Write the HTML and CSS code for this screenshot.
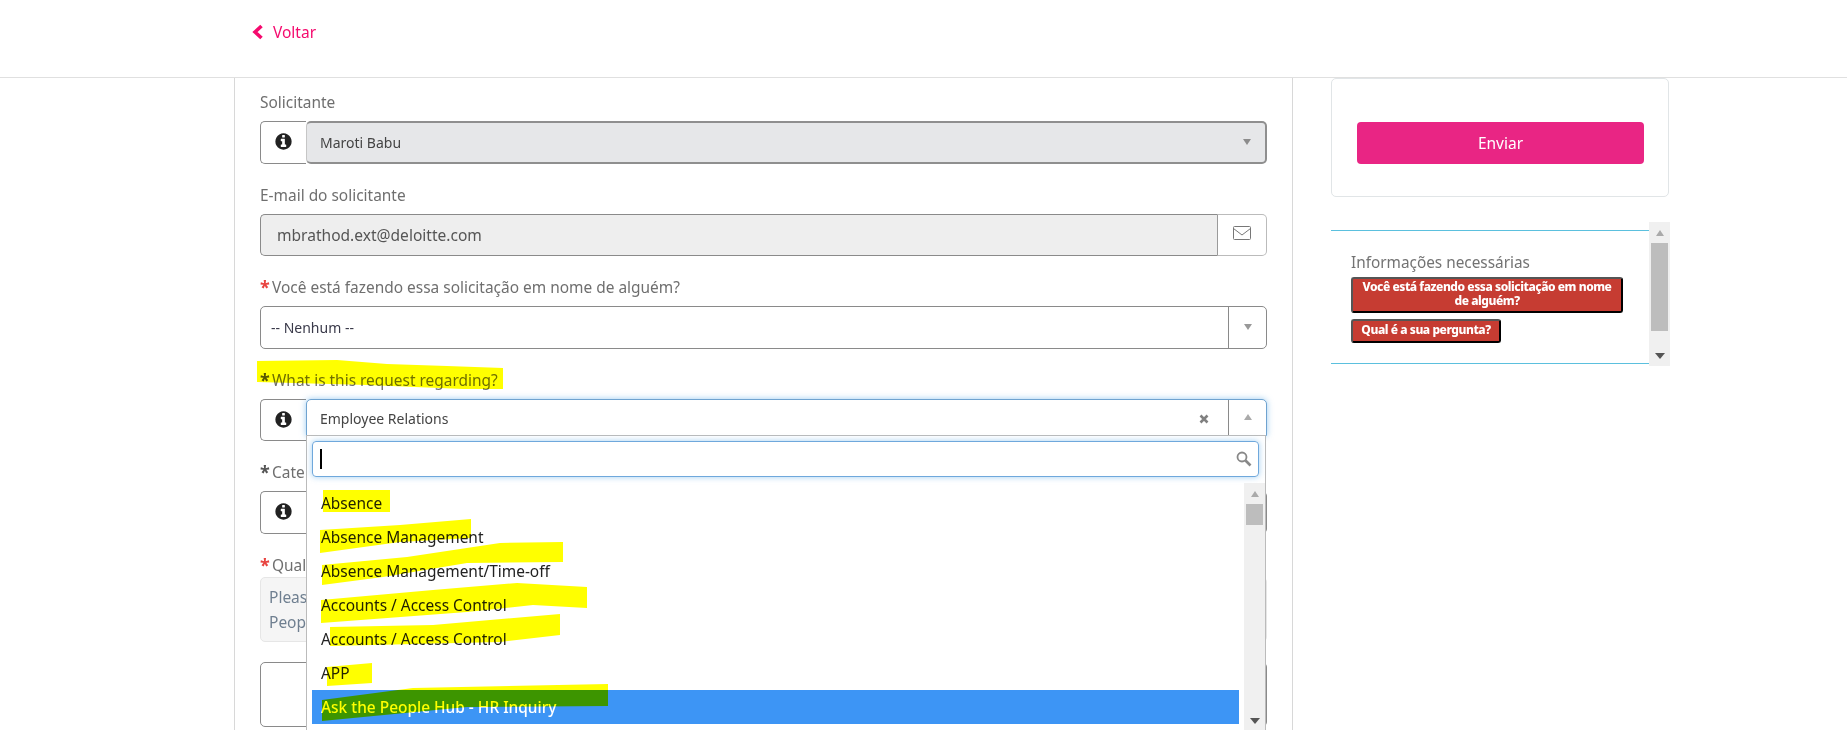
FILE: index.html
```html
<!DOCTYPE html>
<html lang="pt">
<head>
<meta charset="utf-8">
<title>Solicitação</title>
<link rel="stylesheet" href="styles.css">
</head>
<body>
<svg class="defs" width="0" height="0" aria-hidden="true">
  <symbol id="info" viewBox="0 0 1536 1792"><path d="M1024 1376v-160q0-14-9-23t-23-9h-96v-512q0-14-9-23t-23-9h-320q-14 0-23 9t-9 23v160q0 14 9 23t23 9h96v320h-96q-14 0-23 9t-9 23v160q0 14 9 23t23 9h448q14 0 23-9t9-23zm-128-896v-160q0-14-9-23t-23-9h-192q-14 0-23 9t-9 23v160q0 14 9 23t23 9h192q14 0 23-9t9-23zm640 416q0 209-103 385.5t-279.5 279.5-385.5 103-385.5-103-279.5-279.5-103-385.5 103-385.5 279.5-279.5 385.5-103 385.5 103 279.5 279.5 103 385.5z"/></symbol>
</svg>

<header class="topbar">
  <a class="back" href="#">
    <svg class="back-icon" viewBox="0 0 12 16"><polyline points="9.5,2 3,8 9.5,14"/></svg>
    <span>Voltar</span>
  </a>
</header>

<div class="page">
  <main class="form-col">
    <div class="group">
      <label class="label">Solicitante</label>
      <div class="input-group">
        <span class="addon"><svg class="info-icon"><use href="#info"/></svg></span>
        <div class="combo">
          <div class="select select-disabled">
            <span class="select-text">Maroti Babu</span>
            <i class="tri tri-down tri-disabled"></i>
          </div>
        </div>
      </div>
    </div>

    <div class="group">
      <label class="label">E-mail do solicitante</label>
      <div class="input-group">
        <div class="email-input">mbrathod.ext@deloitte.com</div>
        <span class="addon-right">
          <svg class="mail-icon" viewBox="0 0 18 14"><rect x="0.5" y="0.5" width="17" height="13" rx="1"/><polyline points="0.5,2.5 9,9 17.5,2.5"/></svg>
        </span>
      </div>
    </div>

    <div class="group">
      <label class="label"><span class="req req-red">*</span>Você está fazendo essa solicitação em nome de alguém?</label>
      <div class="select select-plain">
        <span class="select-text select-none">-- Nenhum --</span>
        <span class="select-btn"><i class="tri tri-down"></i></span>
      </div>
    </div>

    <div class="group">
      <label class="label"><span class="req">*</span>What is this request regarding?</label>
      <div class="input-group">
        <span class="addon"><svg class="info-icon"><use href="#info"/></svg></span>
        <div class="combo">
          <div class="select select-open">
            <span class="select-text">Employee Relations</span>
            <svg class="clear-icon" viewBox="0 0 10 10"><path d="M1.5 1.5l7 7M8.5 1.5l-7 7"/></svg>
            <span class="select-btn"><i class="tri tri-up"></i></span>
          </div>
          <div class="menu">
            <div class="menu-search">
              <span class="caret"></span>
              <svg class="search-icon" viewBox="0 0 16 16"><circle cx="6" cy="6" r="4.5"/><path d="M9.5 9.5l5 5"/></svg>
            </div>
            <div class="menu-body">
              <ul class="menu-list">
                <li>Absence</li>
                <li>Absence Management</li>
                <li>Absence Management/Time-off</li>
                <li>Accounts / Access Control</li>
                <li>Accounts / Access Control</li>
                <li>APP</li>
                <li class="is-active">Ask the People Hub - HR Inquiry</li>
              </ul>
              <div class="scrollbar scrollbar-menu">
                <span class="sb-btn"><i class="tri tri-up"></i></span>
                <span class="sb-thumb sb-thumb-menu"></span>
                <span class="sb-space"></span>
                <span class="sb-btn"><i class="tri tri-down tri-dark"></i></span>
              </div>
            </div>
          </div>
        </div>
      </div>
    </div>

    <div class="group">
      <label class="label"><span class="req">*</span>Cate</label>
      <div class="input-group">
        <span class="addon"><svg class="info-icon"><use href="#info"/></svg></span>
        <div class="combo"><div class="select"></div></div>
      </div>
    </div>

    <div class="group group-last">
      <label class="label"><span class="req req-red">*</span>Qual</label>
      <div class="help"><div>Pleas</div><div>Peopl</div></div>
      <div class="textarea"></div>
    </div>
  </main>

  <aside class="side-col">
    <div class="card"><button class="submit" type="button">Enviar</button></div>
    <div class="panel">
      <div class="panel-body">
        <div class="panel-title">Informações necessárias</div>
        <div class="badge">Você está fazendo essa solicitação em nome de alguém?</div>
        <div class="badge badge-short">Qual é a sua pergunta?</div>
      </div>
      <div class="scrollbar">
        <span class="sb-btn"><i class="tri tri-up"></i></span>
        <span class="sb-thumb"></span>
        <span class="sb-space"></span>
        <span class="sb-btn"><i class="tri tri-down tri-dark"></i></span>
      </div>
    </div>
  </aside>
</div>

<svg class="marker" viewBox="0 0 1847 730" aria-hidden="true">
  <polygon points="257,361 337,360 387,364 447,366 503,368 503,389 463,389 367,385 257,382"/>
  <polygon points="323,490 390,490 390,512 323,512"/>
  <polygon points="320,530 400,525 471,519 471,538 400,542 320,553"/>
  <polygon points="322,565 407,557 500,543 563,542 563,562 467,563 383,577 322,585"/>
  <polygon points="321,600 433,590 517,583 587,587 587,608 533,605 467,612 321,623"/>
  <polygon points="330,627 433,625 560,614 560,635 500,642 330,646"/>
  <polygon points="327,667 372,663 372,683 327,686"/>
  <polygon points="322,700 413,688 608,684 608,706 467,707 322,721"/>
</svg>
</body>
</html>
```
FILE: styles.css
```css
* { box-sizing: border-box; }
html, body { margin: 0; padding: 0; }
body {
  position: relative;
  width: 1847px;
  height: 730px;
  overflow: hidden;
  background: #fff;
  font-family: "Noto Sans", "Liberation Sans", sans-serif;
  color: #444;
}
.defs { position: absolute; }

/* Top bar */
.topbar {
  height: 78px;
  border-bottom: 1px solid #e0e0e0;
  padding: 21px 0 0 252px;
}
.back {
  display: flex;
  align-items: center;
  gap: 9px;
  height: 22px;
  color: #f50a6e;
  text-decoration: none;
  font-size: 15.5px;
}
.back-icon { width: 12px; height: 16px; }
.back-icon polyline { fill: none; stroke: #f50a6e; stroke-width: 3.6; }

/* Layout */
.page { display: flex; align-items: flex-start; margin-left: 234px; }
.form-col {
  width: 1059px;
  height: 652px;
  padding: 12px 25px 0;
  border-left: 1px solid #d8d8d8;
  border-right: 1px solid #d8d8d8;
  display: flex;
  flex-direction: column;
  gap: 19.1px;
}
.side-col { width: 339px; margin-left: 38px; }

/* Fields */
.group { display: flex; flex-direction: column; }
.label {
  height: 24px;
  line-height: 24px;
  margin-bottom: 7px;
  font-size: 15.45px;
  color: #6f6f6f;
  white-space: nowrap;
}
.req {
  display: inline-block;
  width: 12px;
  font-weight: 700;
  font-size: 18px;
  line-height: 16px;
  color: #555;
  vertical-align: -1px;
}
.req-red { color: #e8433f; }
.input-group { display: flex; height: 42.5px; }
.addon {
  width: 46px;
  flex: none;
  display: flex;
  align-items: center;
  justify-content: center;
  border: 1px solid #8a8a8a;
  border-right: none;
  border-radius: 5px 0 0 5px;
  padding-bottom: 2px;
}
.info-icon { width: 17px; height: 19px; fill: #222; }
.combo { position: relative; flex: 1; display: flex; min-width: 0; }
.select {
  flex: 1;
  height: 100%;
  display: flex;
  align-items: center;
  border: 1px solid #8a8a8a;
  border-radius: 0 5px 5px 0;
  background: #fff;
}
.select-text {
  flex: 1;
  padding-left: 13px;
  font-size: 14px;
  color: #444;
  white-space: nowrap;
}
.select-disabled {
  background: #e6e7e9;
  border: 2px solid #8f8f8f;
  border-left: 1px solid #c6c6c6;
  border-radius: 5px;
  padding-right: 14px;
}
.select-plain {
  flex: none;
  height: 42.5px;
  border-radius: 5px;
}
.select-none { padding-left: 10px; color: #3a3a4a; }
.select-btn {
  width: 38px;
  align-self: stretch;
  flex: none;
  display: flex;
  align-items: center;
  justify-content: center;
  border-left: 1px solid #8a8a8a;
}
.select-open {
  height: 37px;
  padding-top: 3px;
  border-color: #6fa3d0;
  border-radius: 5px 5px 0 0;
  box-shadow: 0 0 6px rgba(102, 175, 233, .65);
}
.select-open .select-btn { margin-top: -3px; }
.clear-icon { width: 10px; height: 10px; margin-right: 19px; }
.clear-icon path { fill: none; stroke: #808080; stroke-width: 2.6; }
.email-input {
  flex: 1;
  display: flex;
  align-items: center;
  padding-left: 16px;
  background: #eee;
  border: 1px solid #8a8a8a;
  border-right: 1px solid #9a9a9a;
  border-radius: 5px 0 0 5px;
  font-size: 15.55px;
  color: #555;
}
.addon-right {
  width: 49px;
  flex: none;
  display: flex;
  align-items: center;
  justify-content: center;
  border: 1px solid #bbb;
  border-left: none;
  border-radius: 0 5px 5px 0;
}
.mail-icon { width: 18px; height: 14px; margin-bottom: 3px; }
.mail-icon rect, .mail-icon polyline { fill: none; stroke: #777; stroke-width: 1; }

/* Triangles */
.tri { display: block; width: 0; height: 0; border-left: 4px solid transparent; border-right: 4px solid transparent; }
.tri-down { border-top: 6px solid #999; }
.tri-up { border-bottom: 6px solid #aaa; }
.tri-dark { border-top-color: #555; border-left-width: 5px; border-right-width: 5px; }
.tri-disabled { border-top-color: #8c8c8c; }

/* Open dropdown */
.menu {
  position: absolute;
  z-index: 5;
  top: 36.5px;
  left: 0;
  width: 960px;
  height: 310px;
  padding: 5px 0 0 5px;
  background: #fff;
  border: 1px solid #bbb;
  border-radius: 0 0 4px 4px;
}
.menu-search {
  height: 36px;
  margin-right: 6px;
  display: flex;
  align-items: center;
  justify-content: space-between;
  padding: 0 6px 0 7px;
  border: 1px solid #6fa8dc;
  border-radius: 4px;
  box-shadow: 0 0 6px rgba(102, 175, 233, .6);
}
.caret { width: 2px; height: 20px; background: #000; }
.search-icon { width: 16px; height: 16px; }
.search-icon circle, .search-icon path { fill: none; stroke: #888; stroke-width: 1.8; }
.search-icon path { stroke-width: 2.6; }
.menu-body { display: flex; align-items: flex-start; margin-top: 6px; }
.menu-list {
  flex: 1;
  list-style: none;
  margin: 3px 5px 0 0;
  padding: 0;
  font-size: 15.45px;
  color: #222;
}
.menu-list li { height: 34px; line-height: 34px; padding-left: 9px; white-space: nowrap; }
.menu-list .is-active { background: #3d95f5; color: #fff; font-weight: 500; }

/* Scrollbars */
.scrollbar {
  width: 21px;
  height: 144px;
  flex: none;
  display: flex;
  flex-direction: column;
  align-items: center;
  background: #f0f0f0;
}
.scrollbar-menu { height: 248px; }
.sb-btn { height: 21px; width: 100%; flex: none; display: flex; align-items: center; justify-content: center; }
.sb-thumb { width: 17px; height: 88px; flex: none; background: #bdbdbd; }
.sb-thumb-menu { height: 21px; }
.sb-space { flex: 1; }

/* Help + textarea */
.group-last .label { margin-bottom: 0; }
.help {
  height: 65px;
  padding: 7px 0 0 8px;
  background: #f5f5f5;
  border: 1px solid #e6e6e6;
  border-radius: 5px;
  font-size: 15.5px;
  line-height: 25px;
  color: #6f7f90;
}
.textarea {
  height: 65px;
  margin-top: 20px;
  border: 1px solid #8a8a8a;
  border-radius: 5px;
}

/* Side column */
.card {
  width: 338px;
  height: 119px;
  padding: 43px 0 0 25px;
  border: 1px solid #e1e5e7;
  border-radius: 5px;
}
.submit {
  display: block;
  width: 287px;
  height: 42px;
  padding: 0;
  border: none;
  border-radius: 4px;
  background: #e92584;
  color: #fff;
  font-family: inherit;
  font-size: 15.5px;
}
.panel { display: flex; align-items: flex-start; margin-top: 25px; }
.panel-body {
  width: 318px;
  height: 134px;
  margin-top: 8px;
  padding: 19px 0 0 20px;
  border-top: 1px solid #5bc0de;
  border-bottom: 1px solid #5bc0de;
}
.panel-title {
  height: 27px;
  line-height: 24px;
  font-size: 15.35px;
  color: #737373;
  white-space: nowrap;
}
.badge {
  width: 272px;
  padding: 1px 6.5px 3px;
  border: 2px solid #000;
  border-top-color: #555;
  border-left-color: #555;
  border-radius: 3px;
  background: #c63c32;
  color: #fff;
  font-size: 12px;
  font-weight: 800;
  letter-spacing: -.45px;
  line-height: 14px;
  text-align: center;
}
.badge-short {
  width: 150px;
  height: 24px;
  margin-top: 6px;
  padding: 1px 0 0;
  white-space: nowrap;
  line-height: 16px;
}

/* Hand-drawn marker highlights over the screenshot */
.marker {
  position: absolute;
  top: 0;
  left: 0;
  z-index: 10;
  width: 1847px;
  height: 730px;
  pointer-events: none;
  mix-blend-mode: multiply;
}
.marker polygon { fill: #ffff00; }
```
